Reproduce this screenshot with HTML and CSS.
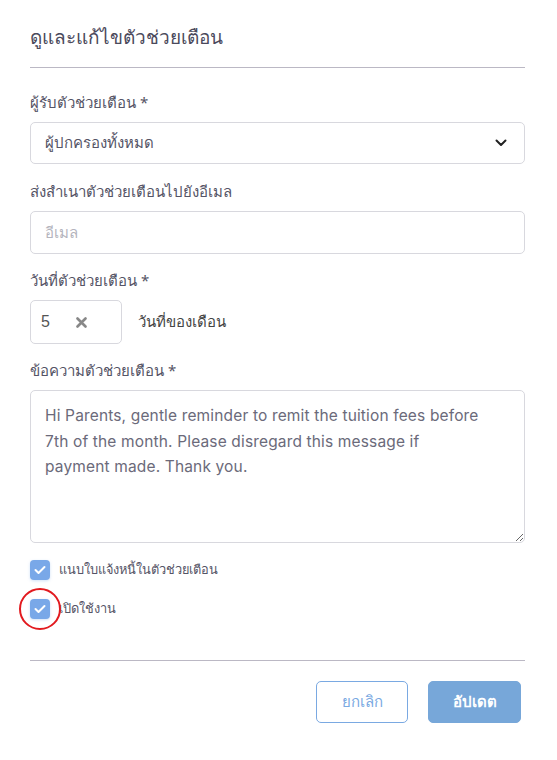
FILE: index.html
```html
<!DOCTYPE html>
<html lang="th">
<head>
<meta charset="utf-8">
<link rel="stylesheet" href="styles.css">
</head>
<body>
<div class="modal">
  <h1 class="title">ดูและแก้ไขตัวช่วยเตือน</h1>
  <hr class="divider">
  <div class="field">
    <label class="label">ผู้รับตัวช่วยเตือน *</label>
    <div class="select">
      <span>ผู้ปกครองทั้งหมด</span>
      <svg class="chev" width="12" height="8" viewBox="0 0 12 8"><path d="M1.5 1.5 L6 6 L10.5 1.5" fill="none" stroke="#222" stroke-width="2" stroke-linecap="round" stroke-linejoin="round"/></svg>
    </div>
  </div>
  <div class="field">
    <label class="label email-label">ส่งสำเนาตัวช่วยเตือนไปยังอีเมล</label>
    <div class="input placeholder">อีเมล</div>
  </div>
  <div class="field">
    <label class="label">วันที่ตัวช่วยเตือน *</label>
    <div class="day-row">
      <div class="day-box">
        <span class="day-num">5</span>
        <svg width="11" height="11" viewBox="0 0 11 11"><path d="M1.5 1.5 L9.5 9.5 M9.5 1.5 L1.5 9.5" stroke="#888" stroke-width="2.6" stroke-linecap="round"/></svg>
      </div>
      <span class="day-text">วันที่ของเดือน</span>
    </div>
  </div>
  <div class="field">
    <label class="label">ข้อความตัวช่วยเตือน *</label>
    <textarea class="message">Hi Parents, gentle reminder to remit the tuition fees before 7th of the month. Please disregard this message if payment made. Thank you.</textarea>
  </div>
  <div class="checks">
    <div class="check-row">
      <span class="box"><svg width="12" height="10" viewBox="0 0 12 10"><path d="M1.5 5 L4.5 8 L10.5 2" fill="none" stroke="#fff" stroke-width="2" stroke-linecap="round" stroke-linejoin="round"/></svg></span>
      <span class="check-label">แนบใบแจ้งหนี้ในตัวช่วยเตือน</span>
    </div>
    <div class="check-row">
      <span class="box circled"><svg width="12" height="10" viewBox="0 0 12 10"><path d="M1.5 5 L4.5 8 L10.5 2" fill="none" stroke="#fff" stroke-width="2" stroke-linecap="round" stroke-linejoin="round"/></svg></span>
      <span class="check-label">เปิดใช้งาน</span>
    </div>
  </div>
  <hr class="divider bottom">
  <div class="actions">
    <button class="btn cancel">ยกเลิก</button>
    <button class="btn update">อัปเดต</button>
  </div>
</div>
</body>
</html>
```
FILE: styles.css
```css
* { box-sizing: border-box; }
html, body { margin: 0; padding: 0; background: #fff; }
body {
  font-family: "Noto Sans", "Liberation Sans", "DejaVu Sans", sans-serif;
  color: #575566;
}
.modal {
  width: 557px;
  padding: 24px 32px 0 30px;
}
.title {
  margin: 0;
  font-size: 19px;
  font-weight: 400;
  color: #4b4a5c;
  line-height: 26px;
}
.divider {
  border: 0;
  border-top: 1px solid #bbb8c4;
  margin: 17px 0 0;
}
.field { display: flex; flex-direction: column; }
.label {
  font-size: 15px;
  line-height: 20px;
  margin: 25px 0 10px;
  color: #555466;
}
.divider + .field .label { margin-top: 24px; }
.select, .input {
  height: 42px;
  border: 1px solid #d8d8de;
  border-radius: 5px;
  display: flex;
  align-items: center;
  justify-content: space-between;
  padding: 0 17px 0 14px;
  font-size: 15px;
  color: #555466;
}
.input { height: 43px; }
.placeholder { color: #b4b4bd; }
.field + .field .label { margin-top: 16px; }
.field + .field .email-label { margin-top: 17px; }
.day-row { display: flex; align-items: center; gap: 16px; }
.day-box {
  width: 92px;
  height: 44px;
  border: 1px solid #d8d8de;
  border-radius: 5px;
  display: flex;
  align-items: center;
  padding-left: 10px;
  gap: 26px;
}
.day-num { font-size: 16px; color: #555; font-family: "Liberation Sans", sans-serif; }
.day-text { font-size: 15px; color: #444; }
.message {
  height: 153px;
  resize: vertical;
  border: 1px solid #d8d8de;
  border-radius: 5px;
  padding: 12px 40px 12px 14px;
  font-family: "Inter", "Lato", sans-serif;
  font-size: 15.5px;
  letter-spacing: 0.15px;
  line-height: 25.5px;
  color: #6b6a7a;
  outline: none;
}
.checks { margin-top: 16px; display: flex; flex-direction: column; gap: 18px; }
.check-row { display: flex; align-items: center; gap: 9px; min-height: 21px; }
.box {
  position: relative;
  width: 20px;
  height: 20px;
  border-radius: 4px;
  background: #79a8e8;
  display: flex;
  align-items: center;
  justify-content: center;
  box-shadow: 0 1px 3px rgba(121,168,232,0.35);
}
.circled::after {
  content: "";
  position: absolute;
  left: -11px;
  top: -11px;
  width: 38px;
  height: 38px;
  border: 2px solid #e21a1f;
  border-radius: 50%;
}
.check-label { font-size: 12.8px; line-height: 21px; color: #555466; }
.divider.bottom { margin-top: 41px; }
.actions {
  display: flex;
  justify-content: flex-end;
  gap: 20px;
  padding: 20px 4px 0 0;
}
.btn {
  width: 92px;
  height: 42px;
  border-radius: 5px;
  font-family: inherit;
  font-size: 15px;
  cursor: pointer;
}
.cancel { background: #fff; border: 1px solid #7aa9e2; color: #7aa9e2; }
.update { background: #77a7d9; border: 1px solid #77a7d9; color: #fff; font-weight: 700; width: 93px; }
```
